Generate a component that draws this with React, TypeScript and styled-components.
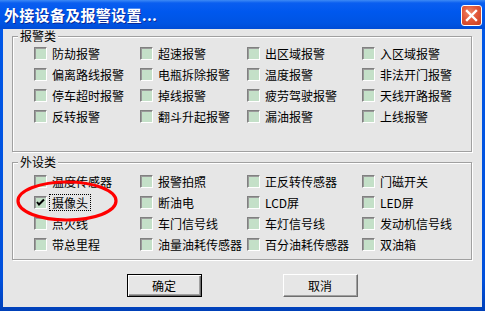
import React from "react";
import styled, { createGlobalStyle } from "styled-components";

const alarmItems = [
	"防劫报警", "超速报警", "出区域报警", "入区域报警",
	"偏离路线报警", "电瓶拆除报警", "温度报警", "非法开门报警",
	"停车超时报警", "掉线报警", "疲劳驾驶报警", "天线开路报警",
	"反转报警", "翻斗升起报警", "漏油报警", "上线报警",
];

const deviceItems = [
	"温度传感器", "报警拍照", "正反转传感器", "门磁开关",
	"摄像头", "断油电", "LCD屏", "LED屏",
	"点火线", "车门信号线", "车灯信号线", "发动机信号线",
	"带总里程", "油量油耗传感器", "百分油耗传感器", "双油箱",
];

const App = () => {
	return (
		<>
			<GlobalStyle />
			<Window>
				<TitleBar>
					<Title>外接设备及报警设置...</Title>
					<CloseButton>
						<svg width="13" height="13" viewBox="0 0 13 13">
							<path d="M2 2 L11 11 M11 2 L2 11" stroke="#fff" strokeWidth="2.4" strokeLinecap="square" />
						</svg>
					</CloseButton>
				</TitleBar>
				<Body>
					<Group $top={4} $bottom={28}>
						<Legend>报警类</Legend>
						<Grid>
							{alarmItems.map((name) => (
								<Item key={name}>
									<Box $checked={false} />
									<Label $focused={false}>{name}</Label>
								</Item>
							))}
						</Grid>
					</Group>
					<Group $top={6} $bottom={8} style={{ marginTop: 3 }}>
						<Legend>外设类</Legend>
						<Grid>
							{deviceItems.map((name) => (
								<Item key={name}>
									<Box $checked={name === "摄像头"}>
										{name === "摄像头" && (
											<svg width="11" height="11" viewBox="0 0 11 11">
												<path d="M2 5 L4 7.5 L9 2.5" stroke="#000" strokeWidth="2" fill="none" />
											</svg>
										)}
									</Box>
									<Label $focused={name === "摄像头"}>{name}</Label>
								</Item>
							))}
						</Grid>
					</Group>
					<ButtonRow>
						<Button $default>确定</Button>
						<Button $default={false}>取消</Button>
					</ButtonRow>
				</Body>
				<Annotation width="110" height="48" viewBox="0 0 110 48">
					<ellipse cx="52" cy="22" rx="49" ry="19" fill="none" stroke="#ff0000" strokeWidth="3.2" />
				</Annotation>
			</Window>
		</>
	);
};

export default App;

const GlobalStyle = createGlobalStyle`
	body {
		margin: 0;
		font-family: "Noto Sans CJK SC", "Liberation Sans", sans-serif;
	}
`;

const Window = styled.div`
	position: relative;
	width: 485px;
	height: 311px;
	display: flex;
	flex-direction: column;
	background: linear-gradient(#0058e8, #0050dc 90%, #0040b8);
	overflow: hidden;
`;

const TitleBar = styled.div`
	height: 29px;
	flex-shrink: 0;
	display: flex;
	align-items: center;
	justify-content: space-between;
	padding: 0 3px 0 4px;
	background: linear-gradient(#3d8af5 0, #0a5ef0 3px, #0058ee 40%, #0054e3 80%, #004cd6 100%);
`;

const Title = styled.div`
	color: #fff;
	font-size: 15px;
	font-weight: 700;
	letter-spacing: 0.3px;
	text-shadow: 1px 1px 0 #0a2a9a;
`;

const CloseButton = styled.div`
	width: 21px;
	height: 21px;
	box-sizing: border-box;
	margin-top: 2px;
	display: flex;
	align-items: center;
	justify-content: center;
	border: 1px solid #fff;
	border-radius: 3px;
	background: radial-gradient(circle at 40% 35%, #f08a6a 0, #e2583a 45%, #c83c1e 100%);
`;

const Body = styled.div`
	flex: 1;
	margin: 0 3px 4px 3px;
	padding: 0 10px 0 9px;
	background-color: #e6e6e6;
	display: flex;
	flex-direction: column;
`;

const Group = styled.fieldset<{ $top: number; $bottom: number }>`
	margin: 0;
	padding: ${(props) => props.$top}px 0 ${(props) => props.$bottom}px 0;
	border: 1px solid #a0a0a0;
	box-shadow: 1px 1px 0 #fff, inset 1px 1px 0 #fff;
	min-inline-size: 0;
`;

const Legend = styled.legend`
	margin-left: 5px;
	padding: 0 2px;
	font-size: 12px;
	line-height: 14px;
	color: #000;
	background-color: #e6e6e6;
`;

const Grid = styled.div`
	display: grid;
	grid-template-columns: 106px 107px 115px auto;
	row-gap: 8px;
	padding-left: 21px;
`;

const Item = styled.div`
	height: 13px;
	display: flex;
	align-items: center;
	gap: 2px;
	white-space: nowrap;
`;

const Box = styled.div<{ $checked: boolean }>`
	width: 13px;
	height: 13px;
	box-sizing: border-box;
	flex-shrink: 0;
	display: flex;
	align-items: center;
	justify-content: center;
	border: 1px solid;
	border-color: #808080 #fff #fff #808080;
	box-shadow: inset 1px 1px 0 #9a9a9a;
	background-color: #c4e0c8;
`;

const Label = styled.span<{ $focused: boolean }>`
	padding: 1px 2px;
	font-size: 12px;
	line-height: 13px;
	color: #000;
	border: 1px dotted ${(props) => (props.$focused ? "#000" : "transparent")};
`;

const ButtonRow = styled.div`
	display: flex;
	justify-content: center;
	gap: 81px;
	margin-top: 14px;
`;

const Button = styled.div<{ $default: boolean }>`
	width: 75px;
	height: 23px;
	box-sizing: border-box;
	display: flex;
	align-items: center;
	justify-content: center;
	font-size: 12px;
	color: #000;
	background-color: #e6e6e6;
	border: 1px solid ${(props) => (props.$default ? "#000" : "transparent")};
	box-shadow: ${(props) =>
		props.$default
			? "inset 1px 1px 0 #fff, inset -1px -1px 0 #6e6e6e, inset -2px -2px 0 #a0a0a0"
			: "inset 1px 1px 0 #fff, inset -1px -1px 0 #6e6e6e, inset -2px -2px 0 #a0a0a0"};
	${(props) => (props.$default ? "" : "border-color: #fff #6e6e6e #6e6e6e #fff; box-shadow: inset -1px -1px 0 #a0a0a0;")}
`;

const Annotation = styled.svg`
	position: absolute;
	left: 15px;
	top: 179px;
	pointer-events: none;
`;
